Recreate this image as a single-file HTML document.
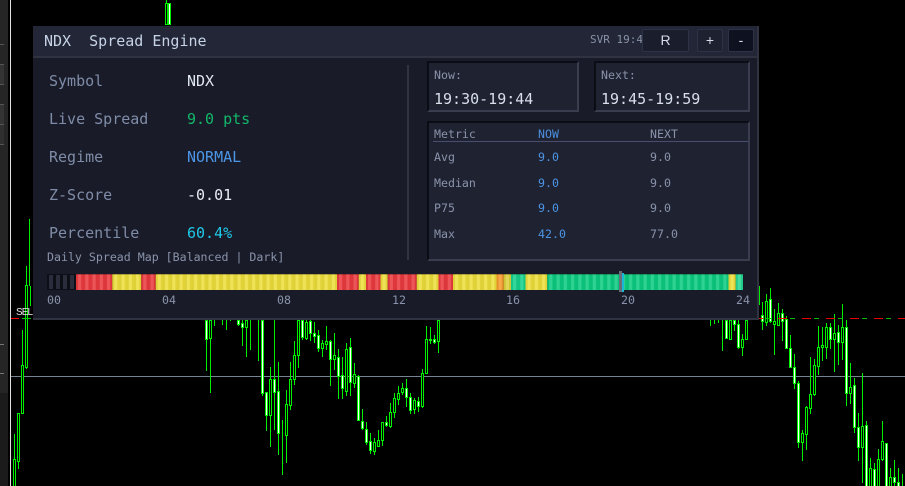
<!DOCTYPE html>
<html><head><meta charset="utf-8"><style>
html,body{margin:0;padding:0;background:#000;width:905px;height:486px;overflow:hidden}
body{position:relative;font-family:"DejaVu Sans Mono","Liberation Mono",monospace}
.t{position:absolute;white-space:pre;line-height:16px}
.l{font-size:15px;color:#7f8ca8}
.s{font-size:11.6px;color:#8a93ab}
.box{position:absolute;box-sizing:border-box;background:#1f2230;border:2px solid;border-color:#0b0d15 #3a3d4e #3a3d4e #0b0d15}
.btn{position:absolute;box-sizing:border-box;border:1px solid #2e3246;border-radius:2px;text-align:center;color:#d5dbe8;height:23px;top:29px}
</style></head><body>
<svg width="905" height="486" style="position:absolute;left:0;top:0" xmlns="http://www.w3.org/2000/svg">
<rect x="0" y="0" width="8" height="486" fill="#252525"/>
<rect x="0" y="65" width="4" height="19" fill="#333"/><rect x="0" y="105" width="4" height="19" fill="#333"/><rect x="0" y="125" width="4" height="19" fill="#2f2f2f"/>
<rect x="0" y="393" width="8" height="93" fill="#1b1b1b"/>
<rect x="0" y="344" width="4" height="1" fill="#777"/><rect x="0" y="373" width="4" height="1" fill="#777"/>
<rect x="0" y="44" width="4" height="1" fill="#555"/><rect x="0" y="64" width="4" height="1" fill="#555"/><rect x="0" y="84" width="4" height="1" fill="#555"/><rect x="0" y="104" width="4" height="1" fill="#555"/><rect x="0" y="124" width="4" height="1" fill="#555"/><rect x="0" y="144" width="4" height="1" fill="#555"/>
<rect x="10" y="0" width="1" height="486" fill="#e0e0e0"/>
<rect x="11" y="376" width="894" height="1" fill="#74838f"/>
<path d="M166.5 0V24M14.5 434V486M18.5 413V469M22.5 330V413M26.5 266V369M29.5 219V286M30.5 286V306M206.5 320V371M210.5 320V393M214.5 320V326M222.5 320V325M226.5 320V330M230.5 320V321M238.5 320V326M242.5 320V346M246.5 320V357M250.5 320V350M258.5 320V361M262.5 320V396M266.5 392V431M270.5 367V447M274.5 320V430M278.5 362V455M282.5 420V475M286.5 390V463M290.5 362V410M294.5 341V385M298.5 320V368M302.5 320V340M306.5 320V340M310.5 320V341M314.5 322V343M318.5 330V352M322.5 340V357M326.5 326V350M330.5 340V386M334.5 333V370M338.5 349V399M342.5 357V399M346.5 343V396M350.5 338V396M354.5 363V388M358.5 375V421M362.5 409V430M366.5 422V445M370.5 433V454M374.5 438V455M378.5 430V447M382.5 422V446M386.5 416V427M390.5 403V428M394.5 393V418M398.5 386V405M402.5 383V395M406.5 379V407M410.5 393V414M414.5 398V414M418.5 397V412M422.5 369V408M426.5 326V373M430.5 327V344M434.5 335V344M438.5 320V353M710.5 320V326M714.5 320V324M718.5 320V323M722.5 320V351M726.5 320V338M730.5 320V339M734.5 320V331M738.5 320V349M742.5 334V356M746.5 320V339M759.5 286V305M762.5 302V330M766.5 294V326M770.5 288V323M774.5 309V355M778.5 303V326M782.5 309V341M786.5 316V349M790.5 335V367M794.5 354V389M798.5 381V448M802.5 430V461M806.5 406V450M810.5 357V414M814.5 359V396M818.5 326V375M822.5 327V361M826.5 323V359M830.5 323V349M834.5 314V372M838.5 325V365M842.5 304V360M846.5 320V406M850.5 363V404M854.5 378V433M858.5 413V461M862.5 373V483M866.5 421V486M870.5 458V486M874.5 463V486M878.5 449V486M882.5 421V461M886.5 443V486M890.5 468V486M894.5 460V486M898.5 468V486M902.5 474V486" stroke="#00f000" fill="none"/>
<path d="M13.5 459.5V486.5h2V459.5zM17.5 413.5V461.5h2V413.5zM21.5 365.5V413.5h2V365.5zM25.5 285.5V367.5h2V285.5zM165.5 3.5V24.5h2V3.5zM209.5 320.5V338.5h2V320.5zM245.5 320.5V327.5h2V320.5zM269.5 379.5V415.5h2V379.5zM285.5 404.5V435.5h2V404.5zM289.5 379.5V405.5h2V379.5zM293.5 355.5V379.5h2V355.5zM297.5 320.5V355.5h2V320.5zM305.5 322.5V338.5h2V322.5zM321.5 343.5V348.5h2V343.5zM325.5 341.5V344.5h2V341.5zM333.5 355.5V359.5h2V355.5zM345.5 349.5V391.5h2V349.5zM353.5 374.5V383.5h2V374.5zM373.5 442.5V451.5h2V442.5zM377.5 440.5V446.5h2V440.5zM381.5 422.5V440.5h2V422.5zM389.5 412.5V426.5h2V412.5zM393.5 398.5V412.5h2V398.5zM397.5 393.5V399.5h2V393.5zM401.5 388.5V392.5h2V388.5zM413.5 400.5V409.5h2V400.5zM421.5 373.5V406.5h2V373.5zM425.5 339.5V373.5h2V339.5zM429.5 339.5V340.5h2V339.5zM437.5 320.5V341.5h2V320.5zM729.5 320.5V339.5h2V320.5zM741.5 339.5V347.5h2V339.5zM745.5 320.5V339.5h2V320.5zM765.5 301.5V322.5h2V301.5zM773.5 321.5V324.5h2V321.5zM777.5 313.5V325.5h2V313.5zM801.5 433.5V442.5h2V433.5zM805.5 407.5V434.5h2V407.5zM809.5 394.5V408.5h2V394.5zM813.5 365.5V394.5h2V365.5zM817.5 347.5V366.5h2V347.5zM821.5 345.5V347.5h2V345.5zM825.5 327.5V347.5h2V327.5zM833.5 333.5V339.5h2V333.5zM841.5 327.5V342.5h2V327.5zM849.5 387.5V393.5h2V387.5zM861.5 426.5V447.5h2V426.5zM869.5 468.5V486.5h2V468.5zM877.5 459.5V486.5h2V459.5zM881.5 441.5V459.5h2V441.5zM889.5 477.5V486.5h2V477.5z" stroke="#00f000" fill="#000"/>
<path d="M168.5 3.5V24.5h2V3.5zM205.5 320.5V339.5h2V320.5zM237.5 320.5V324.5h2V320.5zM241.5 323.5V327.5h2V323.5zM261.5 320.5V393.5h2V320.5zM265.5 392.5V415.5h2V392.5zM273.5 379.5V392.5h2V379.5zM277.5 391.5V433.5h2V391.5zM301.5 320.5V337.5h2V320.5zM309.5 321.5V333.5h2V321.5zM313.5 333.5V336.5h2V333.5zM317.5 335.5V348.5h2V335.5zM329.5 341.5V359.5h2V341.5zM337.5 357.5V376.5h2V357.5zM341.5 375.5V388.5h2V375.5zM349.5 347.5V382.5h2V347.5zM357.5 376.5V420.5h2V376.5zM361.5 421.5V428.5h2V421.5zM365.5 429.5V442.5h2V429.5zM369.5 441.5V450.5h2V441.5zM385.5 422.5V425.5h2V422.5zM405.5 388.5V397.5h2V388.5zM409.5 397.5V410.5h2V397.5zM417.5 401.5V406.5h2V401.5zM433.5 339.5V342.5h2V339.5zM725.5 320.5V338.5h2V320.5zM733.5 320.5V324.5h2V320.5zM737.5 324.5V347.5h2V324.5zM761.5 315.5V321.5h2V315.5zM769.5 299.5V321.5h2V299.5zM781.5 313.5V321.5h2V313.5zM785.5 319.5V348.5h2V319.5zM789.5 348.5V367.5h2V348.5zM793.5 367.5V383.5h2V367.5zM797.5 383.5V442.5h2V383.5zM829.5 327.5V339.5h2V327.5zM837.5 332.5V342.5h2V332.5zM845.5 327.5V393.5h2V327.5zM853.5 385.5V427.5h2V385.5zM857.5 427.5V447.5h2V427.5zM865.5 425.5V486.5h2V425.5zM873.5 469.5V486.5h2V469.5zM885.5 443.5V486.5h2V443.5zM893.5 477.5V482.5h2V477.5zM897.5 482.5V486.5h2V482.5z" stroke="#00f000" fill="#fff"/>
<path d="M11 318.5H19" stroke="#f00"/><path d="M22 318.5H31" stroke="#00d000"/>
<line x1="754" y1="318.5" x2="905" y2="318.5" stroke="#e80000" stroke-dasharray="9 15"/>
<line x1="766" y1="318.5" x2="905" y2="318.5" stroke="#00c000" stroke-dasharray="5 19"/>
</svg>
<div class="t" style="left:16px;top:305px;font-size:10px;color:#e8e8e8;font-family:'Liberation Sans',sans-serif;letter-spacing:-.9px">SEL</div>

<div style="position:absolute;left:33px;top:26px;width:726px;height:294px;box-sizing:border-box;background:#191c28;border-right:2px solid #2f3341;border-bottom:2px solid #2f3341">
<div style="position:absolute;left:0;top:0;width:724px;height:30px;background:#222636;border-bottom:2px solid #2f3341"></div>
</div>
<div class="t" style="left:44px;top:33px;font-size:15px;color:#c6d2e6">NDX  Spread Engine</div>
<div class="t" style="left:590px;top:32px;width:52px;overflow:hidden;font-size:11px;color:#8a92a8">SVR 19:45</div>
<div class="btn" style="left:642px;width:47px;background:#1a1d2b;font-size:14px;line-height:21px;font-family:'Liberation Sans',sans-serif">R</div>
<div class="btn" style="left:697px;width:26px;background:#1e2130;font-size:14px;line-height:21px;font-family:'Liberation Sans',sans-serif">+</div>
<div class="btn" style="left:728px;width:26px;background:#0e1220;font-size:14px;line-height:21px;font-family:'Liberation Sans',sans-serif">-</div>

<div class="t l" style="left:49px;top:73px">Symbol</div><div class="t l" style="left:187px;top:73px;color:#dfe6f2">NDX</div>
<div class="t l" style="left:49px;top:111px">Live Spread</div><div class="t l" style="left:187px;top:111px;color:#12b76a">9.0 pts</div>
<div class="t l" style="left:49px;top:149px">Regime</div><div class="t l" style="left:187px;top:149px;color:#4c95e6">NORMAL</div>
<div class="t l" style="left:49px;top:187px">Z-Score</div><div class="t l" style="left:187px;top:187px;color:#e8edf5">-0.01</div>
<div class="t l" style="left:49px;top:225px">Percentile</div><div class="t l" style="left:187px;top:225px;color:#1fc8e8">60.4%</div>
<div style="position:absolute;left:407px;top:65px;width:2px;height:195px;background:#2f3342"></div>

<div class="box" style="left:427px;top:61px;width:152px;height:51px"></div>
<div class="box" style="left:594px;top:61px;width:156px;height:51px"></div>
<div class="box" style="left:427px;top:121px;width:323px;height:140px"></div>
<div class="t s" style="left:434px;top:67px">Now:</div>
<div class="t" style="left:434px;top:91px;font-size:15px;color:#d8dfeb">19:30-19:44</div>
<div class="t s" style="left:601px;top:67px">Next:</div>
<div class="t" style="left:601px;top:91px;font-size:15px;color:#d8dfeb">19:45-19:59</div>
<div style="position:absolute;left:433px;top:141px;width:315px;height:1px;background:#4a4c72"></div>
<div class="t s" style="left:434px;top:126px">Metric</div><div class="t s" style="left:538px;top:126px;color:#4c8fe0">NOW</div><div class="t s" style="left:650px;top:126px">NEXT</div>
<div class="t s" style="left:434px;top:149px">Avg</div><div class="t s" style="left:538px;top:149px;color:#4c95e6">9.0</div><div class="t s" style="left:650px;top:149px">9.0</div>
<div class="t s" style="left:434px;top:175px">Median</div><div class="t s" style="left:538px;top:175px;color:#4c95e6">9.0</div><div class="t s" style="left:650px;top:175px">9.0</div>
<div class="t s" style="left:434px;top:200px">P75</div><div class="t s" style="left:538px;top:200px;color:#4c95e6">9.0</div><div class="t s" style="left:650px;top:200px">9.0</div>
<div class="t s" style="left:434px;top:226px">Max</div><div class="t s" style="left:538px;top:226px;color:#4c95e6">42.0</div><div class="t s" style="left:650px;top:226px">77.0</div>

<div class="t s" style="left:47px;top:249px">Daily Spread Map [Balanced | Dark]</div>
<svg width="720" height="26" style="position:absolute;left:40px;top:269px" xmlns="http://www.w3.org/2000/svg">
<defs><pattern id="p" width="7.25" height="16" patternUnits="userSpaceOnUse" x="0"><rect x="0" y="0" width="2" height="16" fill="#000" fill-opacity=".06"/><rect x="2" y="0" width="3.2" height="16" fill="#fff" fill-opacity=".14"/><rect x="5.2" y="0" width="2.05" height="16" fill="#000" fill-opacity=".05"/></pattern></defs>
<g transform="translate(7,5)">
<rect x="0" width="29" height="16" fill="#0d0f16"/>
<rect x="2" y="1" width="4" height="14" fill="#2a2e3c"/><rect x="9" y="1" width="4" height="14" fill="#2a2e3c"/><rect x="16" y="1" width="4" height="14" fill="#2a2e3c"/><rect x="23" y="1" width="4" height="14" fill="#2a2e3c"/>
<rect x="29" width="36.25" height="16" fill="#ea3a3e"/>
<rect x="65.25" width="29" height="16" fill="#ecdd3a"/>
<rect x="94.25" width="14.5" height="16" fill="#ea3a3e"/>
<rect x="108.75" width="181.25" height="16" fill="#ecdd3a"/>
<rect x="290" width="21.75" height="16" fill="#ea3a3e"/>
<rect x="311.75" width="7.25" height="16" fill="#ecdd3a"/>
<rect x="319" width="14.5" height="16" fill="#ea3a3e"/>
<rect x="333.5" width="7.25" height="16" fill="#ecdd3a"/>
<rect x="340.75" width="29" height="16" fill="#ea3a3e"/>
<rect x="369.75" width="21.75" height="16" fill="#ecdd3a"/>
<rect x="391.5" width="14.5" height="16" fill="#ea3a3e"/>
<rect x="406" width="43.5" height="16" fill="#ecdd3a"/>
<rect x="449.5" width="7.25" height="16" fill="#f59a2c"/>
<rect x="456.75" width="7.25" height="16" fill="#dccf3a"/>
<rect x="464" width="14.5" height="16" fill="#14d08a"/>
<rect x="478.5" width="21.75" height="16" fill="#ecdd3a"/>
<rect x="500.25" width="181.25" height="16" fill="#0ccb80"/>
<rect x="681.5" width="7.25" height="16" fill="#ecdd3a"/>
<rect x="688.75" width="7.25" height="16" fill="#25d692"/>
<rect x="29" width="667" height="16" fill="url(#p)"/>
<rect x="29" width="667" height="1" fill="#000" fill-opacity=".25"/>
<rect x="572" y="-3" width="3" height="21" fill="#6a6e78"/>
<rect x="575" y="-1" width="2" height="19" fill="#18b8d8"/>
</g></svg>
<div class="t s" style="left:47px;top:292px">00</div>
<div class="t s" style="left:162px;top:292px">04</div>
<div class="t s" style="left:277px;top:292px">08</div>
<div class="t s" style="left:392px;top:292px">12</div>
<div class="t s" style="left:506px;top:292px">16</div>
<div class="t s" style="left:621px;top:292px">20</div>
<div class="t s" style="left:736px;top:292px">24</div>
</body></html>
